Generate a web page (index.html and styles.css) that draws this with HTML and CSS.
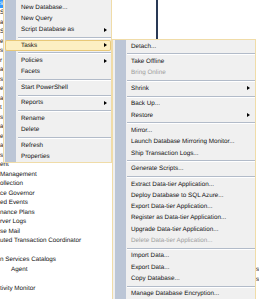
FILE: index.html
```html
<!DOCTYPE html>
<html lang="en">
<head>
    <meta charset="UTF-8">
    <meta name="viewport" content="width=device-width, initial-scale=1.0">
    <title>Object Explorer - Tasks</title>
    <link rel="stylesheet" href="styles.css">
</head>
<body>
    <div class="explorer">
        <ul class="tree">
            <li class="selected">s</li>
            <li>Se</li>
            <li>a</li>
            <li>Sa</li>
            <li>e</li>
            <li>s</li>
            <li>r</li>
            <li>a</li>
            <li>s</li>
            <li>e</li>
            <li>a</li>
            <li>t</li>
            <li>s</li>
            <li>a</li>
            <li>e</li>
            <li>a</li>
            <li>s</li>
            <li>ent</li>
            <li>Management</li>
            <li>ollection</li>
            <li>ce Governor</li>
            <li>ed Events</li>
            <li>nance Plans</li>
            <li>rver Logs</li>
            <li>se Mail</li>
            <li>uted Transaction Coordinator</li>
            <li></li>
            <li>n Services Catalogs</li>
            <li class="indent">Agent</li>
            <li></li>
            <li>tivity Monitor</li>
            <li></li>
        </ul>
        <div class="doc">
            <div class="doc-line"></div>
            <ul class="doc-rows">
                <li>s</li>
                <li>s</li>
            </ul>
        </div>
    </div>

    <ul class="menu main-menu">
        <li class="item">New Database...</li>
        <li class="item">New Query</li>
        <li class="item sub">Script Database as</li>
        <li class="sep"></li>
        <li class="item sub active">Tasks</li>
        <li class="sep"></li>
        <li class="item sub">Policies</li>
        <li class="item">Facets</li>
        <li class="sep"></li>
        <li class="item">Start PowerShell</li>
        <li class="sep"></li>
        <li class="item sub">Reports</li>
        <li class="sep"></li>
        <li class="item">Rename</li>
        <li class="item">Delete</li>
        <li class="sep"></li>
        <li class="item">Refresh</li>
        <li class="item">Properties</li>
    </ul>

    <ul class="menu tasks-menu">
        <li class="item">Detach...</li>
        <li class="sep"></li>
        <li class="item">Take Offline</li>
        <li class="item disabled">Bring Online</li>
        <li class="sep"></li>
        <li class="item sub">Shrink</li>
        <li class="sep"></li>
        <li class="item">Back Up...</li>
        <li class="item sub">Restore</li>
        <li class="sep"></li>
        <li class="item">Mirror...</li>
        <li class="item">Launch Database Mirroring Monitor...</li>
        <li class="item">Ship Transaction Logs...</li>
        <li class="sep"></li>
        <li class="item">Generate Scripts...</li>
        <li class="sep"></li>
        <li class="item">Extract Data-tier Application...</li>
        <li class="item">Deploy Database to SQL Azure...</li>
        <li class="item">Export Data-tier Application...</li>
        <li class="item">Register as Data-tier Application...</li>
        <li class="item">Upgrade Data-tier Application...</li>
        <li class="item disabled">Delete Data-tier Application...</li>
        <li class="sep"></li>
        <li class="item">Import Data...</li>
        <li class="item">Export Data...</li>
        <li class="item">Copy Database...</li>
        <li class="sep"></li>
        <li class="item">Manage Database Encryption...</li>
    </ul>
</body>
</html>
```

FILE: styles.css
```css
body {
    margin: 0;
    width: 259px;
    height: 299px;
    overflow: hidden;
    position: relative;
    background-color: #ffffff;
    font-family: "Liberation Sans", Arial, sans-serif;
    font-size: 6.3px;
    color: #111111;
    text-rendering: geometricPrecision;
}

ul {
    list-style: none;
    margin: 0;
    padding: 0;
}

/* object explorer behind the menus */
.explorer {
    display: flex;
    height: 299px;
}

.tree {
    flex: none;
    width: 112px;
    margin-top: -1.25px;
}

.tree li {
    height: 9.5px;
    line-height: 9.5px;
    white-space: nowrap;
    overflow: hidden;
}

.tree li.selected {
    background-color: #3399ff;
    color: #ffffff;
}

.tree li.indent {
    padding-left: 11px;
}

.doc {
    flex: 1;
}

.doc-line {
    margin-left: 44px;
    width: 2px;
    height: 39px;
    background-color: #293955;
}

.doc-rows {
    margin-top: 226px;
}

.doc-rows li {
    height: 9.5px;
    line-height: 9.5px;
    padding-left: 144px;
}

/* context menus */
.menu {
    position: absolute;
    box-sizing: border-box;
    border: 1px solid #f0dca8;
    background-color: #f0f0f0;
}

.main-menu {
    left: 3px;
    top: -1px;
    width: 109px;
    padding-top: 1.5px;
    background-image: linear-gradient(to right, #f0f0f0 1px, #bcc6d6 1px, #bcc6d6 12px, #f0f0f0 12px);
}

.tasks-menu {
    left: 112px;
    top: 39px;
    width: 144px;
    padding-top: 0.5px;
    background-image: linear-gradient(to right, #f0f0f0 2px, #bcc6d6 2px, #bcc6d6 13px, #f0f0f0 13px);
}

.item {
    display: flex;
    justify-content: space-between;
    align-items: center;
    height: 11.25px;
    line-height: 11.25px;
    padding: 0 4px 0 17px;
    white-space: nowrap;
}

.tasks-menu .item {
    padding: 0 5px 0 18px;
}

.item.sub::after {
    content: "";
    border-left: 3px solid #000000;
    border-top: 2.5px solid transparent;
    border-bottom: 2.5px solid transparent;
}

.item.active {
    margin-left: 1px;
    padding-left: 16px;
    background-color: #fcefc3;
    box-shadow: inset 0 0 0 1px #e8c878;
    border-radius: 2px;
}

.item.disabled {
    color: #9d9d9d;
}

.sep {
    height: 1px;
    margin: 1.5px 0 0.75px 14px;
    background-color: #b2bbc9;
    border-bottom: 1px solid #ffffff;
}
```
